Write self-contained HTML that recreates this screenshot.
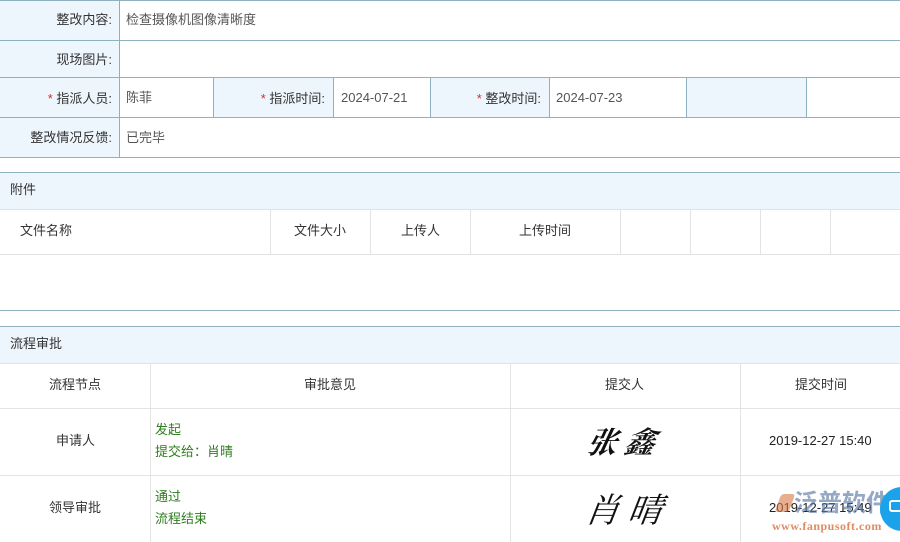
<!DOCTYPE html>
<html><head><meta charset="utf-8"><style>
*{margin:0;padding:0;box-sizing:border-box}
body{width:900px;height:542px;overflow:hidden;background:#fff;font-family:"Liberation Sans","Noto Sans CJK SC",sans-serif;font-size:13px;color:#333;position:relative}
.a{position:absolute}
.lb{background:#eef6fd}
.hl{position:absolute;left:0;width:900px;height:1px}
.vl{position:absolute;width:1px}
.t{position:absolute;white-space:nowrap;line-height:16px}
.r{text-align:right}
.s{color:#d03030}
.g{color:#2e7d1e}
</style></head><body>
<div class="a lb" style="left:0;top:0;width:120px;height:157px"></div>
<div class="a lb" style="left:213px;top:77px;width:120px;height:40px"></div>
<div class="a lb" style="left:430px;top:77px;width:119px;height:40px"></div>
<div class="a lb" style="left:686px;top:77px;width:120px;height:40px"></div>
<div class="hl" style="top:0;background:#8fb0bf"></div>
<div class="hl" style="top:40px;background:#8fb0bf"></div>
<div class="hl" style="top:77px;background:#8fb0bf"></div>
<div class="hl" style="top:117px;background:#8fb0bf"></div>
<div class="hl" style="top:157px;background:#8fb0bf"></div>
<div class="vl" style="left:119px;top:0;height:157px;background:#8fb0bf"></div>
<div class="vl" style="left:213px;top:77px;height:40px;background:#8fb0bf"></div>
<div class="vl" style="left:333px;top:77px;height:40px;background:#8fb0bf"></div>
<div class="vl" style="left:430px;top:77px;height:40px;background:#8fb0bf"></div>
<div class="vl" style="left:549px;top:77px;height:40px;background:#8fb0bf"></div>
<div class="vl" style="left:686px;top:77px;height:40px;background:#8fb0bf"></div>
<div class="vl" style="left:806px;top:77px;height:40px;background:#8fb0bf"></div>
<div class="t r" style="right:788px;top:12px">整改内容:</div>
<div class="t" style="left:126px;top:12px;color:#555">检查摄像机图像清晰度</div>
<div class="t r" style="right:788px;top:52px">现场图片:</div>
<div class="t r" style="right:788px;top:91px"><span class="s">* </span>指派人员:</div>
<div class="t" style="left:126px;top:90px;color:#555">陈菲</div>
<div class="t r" style="right:575px;top:91px"><span class="s">* </span>指派时间:</div>
<div class="t" style="left:341px;top:90px;color:#555">2024-07-21</div>
<div class="t r" style="right:359px;top:91px"><span class="s">* </span>整改时间:</div>
<div class="t" style="left:556px;top:90px;color:#555">2024-07-23</div>
<div class="t r" style="right:788px;top:130px">整改情况反馈:</div>
<div class="t" style="left:126px;top:130px;color:#555">已完毕</div>
<div class="a lb" style="left:0;top:172px;width:900px;height:37px"></div>
<div class="hl" style="top:172px;background:#8fb0bf"></div>
<div class="hl" style="top:209px;background:#e3e3e3"></div>
<div class="hl" style="top:254px;background:#e3e3e3"></div>
<div class="hl" style="top:310px;background:#8fb0bf"></div>
<div class="t" style="left:10px;top:182px">附件</div>
<div class="vl" style="left:270px;top:209px;height:45px;background:#e3e3e3"></div>
<div class="vl" style="left:370px;top:209px;height:45px;background:#e3e3e3"></div>
<div class="vl" style="left:470px;top:209px;height:45px;background:#e3e3e3"></div>
<div class="vl" style="left:620px;top:209px;height:45px;background:#e3e3e3"></div>
<div class="vl" style="left:690px;top:209px;height:45px;background:#e3e3e3"></div>
<div class="vl" style="left:760px;top:209px;height:45px;background:#e3e3e3"></div>
<div class="vl" style="left:830px;top:209px;height:45px;background:#e3e3e3"></div>
<div class="t" style="left:20px;top:223px">文件名称</div>
<div class="t" style="left:294px;top:223px">文件大小</div>
<div class="t" style="left:401px;top:223px">上传人</div>
<div class="t" style="left:519px;top:223px">上传时间</div>
<div class="a lb" style="left:0;top:326px;width:900px;height:37px"></div>
<div class="hl" style="top:326px;background:#8fb0bf"></div>
<div class="hl" style="top:363px;background:#e3e3e3"></div>
<div class="hl" style="top:408px;background:#e3e3e3"></div>
<div class="hl" style="top:475px;background:#e3e3e3"></div>
<div class="t" style="left:10px;top:336px">流程审批</div>
<div class="vl" style="left:150px;top:363px;height:179px;background:#e3e3e3"></div>
<div class="vl" style="left:510px;top:363px;height:179px;background:#e3e3e3"></div>
<div class="vl" style="left:740px;top:363px;height:179px;background:#e3e3e3"></div>
<div class="t" style="left:49px;top:377px">流程节点</div>
<div class="t" style="left:304px;top:377px">审批意见</div>
<div class="t" style="left:605px;top:377px">提交人</div>
<div class="t" style="left:795px;top:377px">提交时间</div>
<div class="t" style="left:56px;top:433px">申请人</div>
<div class="t g" style="left:155px;top:422px">发起</div>
<div class="t g" style="left:155px;top:444px">提交给：肖晴</div>
<div class="t" style="left:769px;top:433px;color:#222">2019-12-27 15:40</div>
<div class="t" style="left:49px;top:500px">领导审批</div>
<div class="t g" style="left:155px;top:489px">通过</div>
<div class="t g" style="left:155px;top:511px">流程结束</div>
<div class="t" style="left:769px;top:500px;color:#222">2019-12-27 15:49</div>
<div class="t" style="left:588px;top:422px;font-size:30px;line-height:36px;font-family:'Noto Serif CJK SC',serif;font-style:italic;font-weight:bold;color:#111;transform:skewX(-12deg)">张 鑫</div>
<div class="t" style="left:586px;top:488px;font-size:34px;line-height:40px;font-family:'Noto Serif CJK SC',serif;font-style:italic;color:#111;transform:skewX(-8deg)">肖 晴</div>
<div class="a" style="left:778px;top:494px;width:14px;height:18px;background:rgba(215,120,70,0.6);transform:skewX(-20deg);border-radius:3px"></div>
<div class="t" style="left:794px;top:490px;font-size:24px;line-height:28px;color:rgba(90,120,165,0.65);font-weight:bold">泛普软件</div>
<div class="t" style="left:772px;top:518px;font-size:12px;font-family:'Liberation Serif',serif;color:rgba(215,110,60,0.8);font-weight:bold;letter-spacing:0.5px">www.fanpusoft.com</div>
<div class="a" style="left:880px;top:487px;width:44px;height:44px;border-radius:50%;background:#1aa2ea"></div>
<div class="a" style="left:889px;top:500px;width:14px;height:12px;border:2px solid #fff;border-radius:3px"></div>
</body></html>
